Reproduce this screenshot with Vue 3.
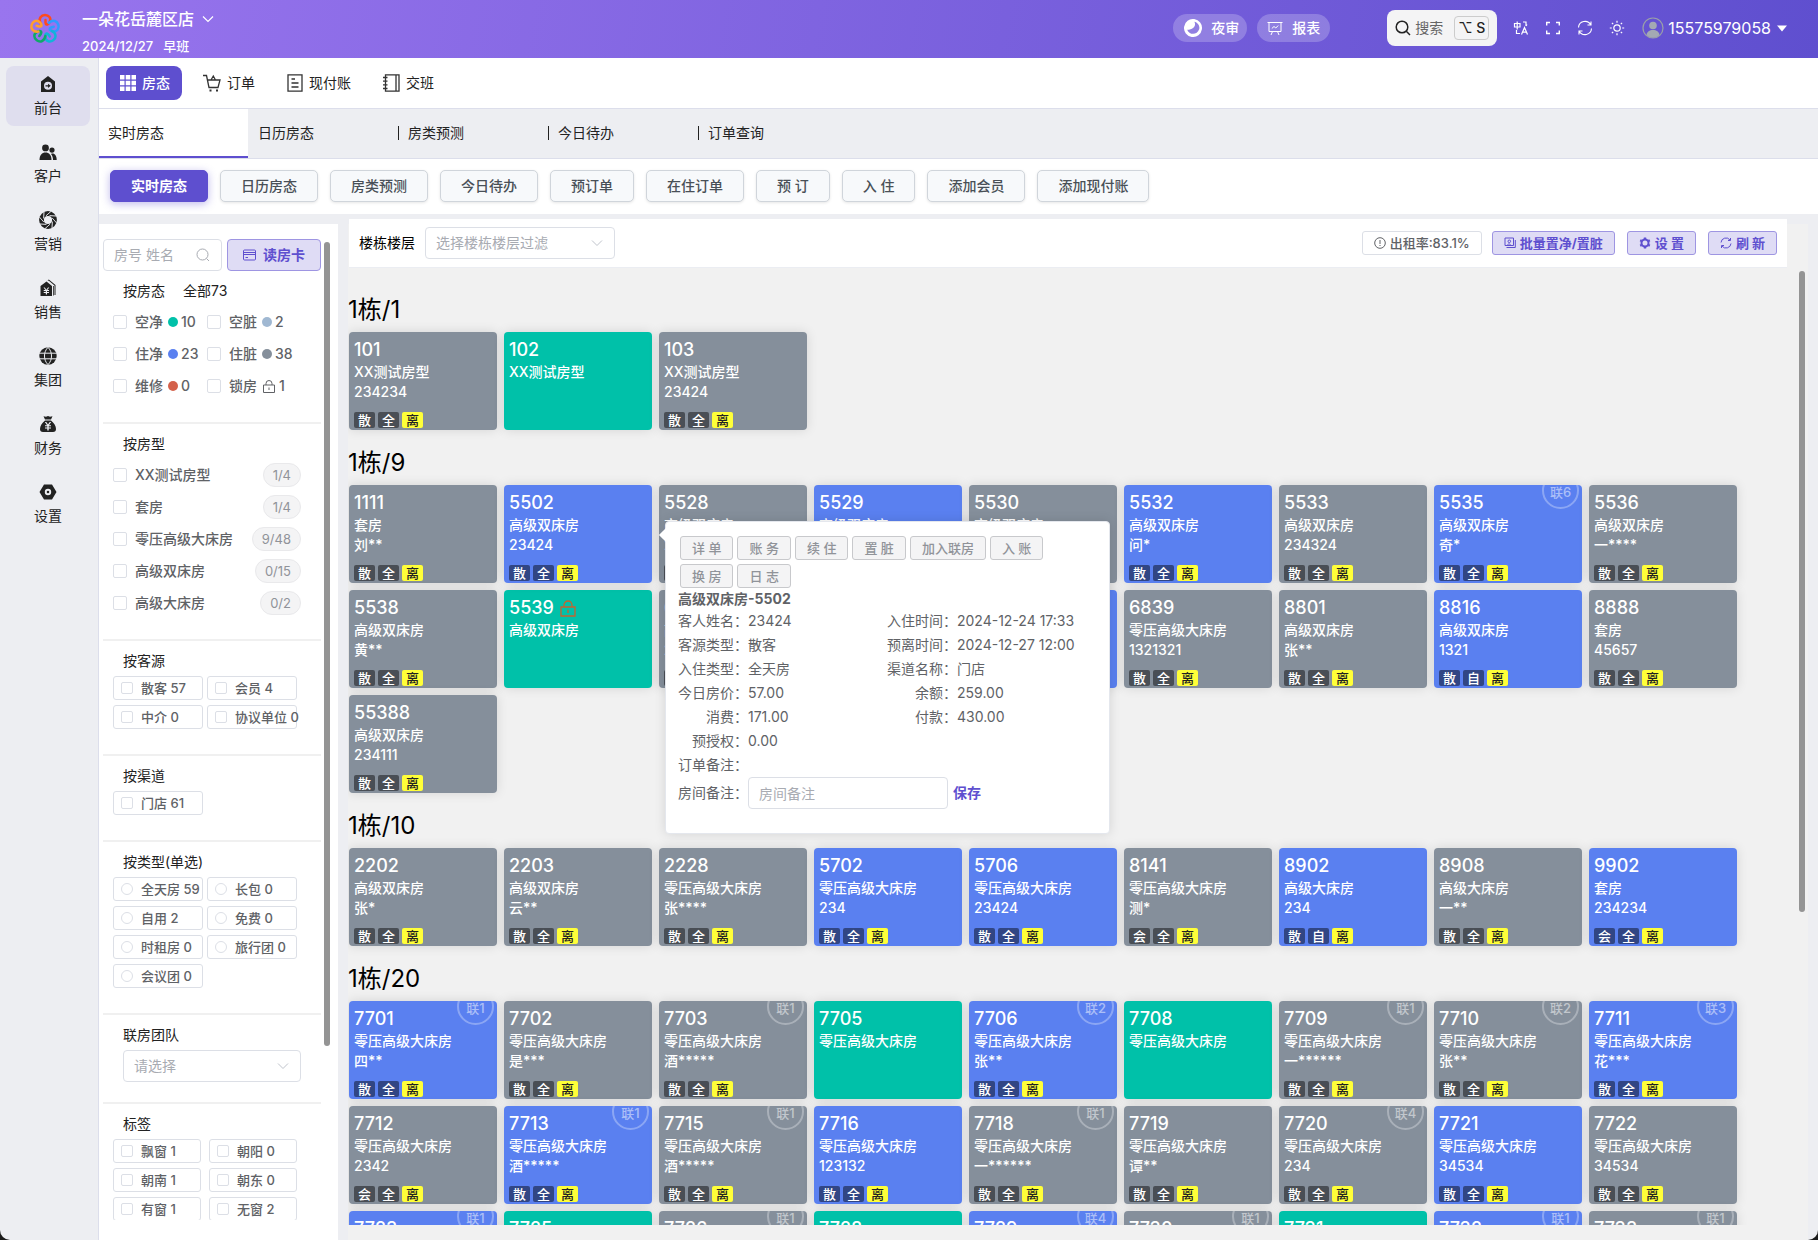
<script setup>
import { ref } from 'vue'

const sideItems = [
  { name: '前台', paths: ['M9 1 16 6.5V17H2V6.5Z M9 6.800a4 4 0 1 0 0 8 4 4 0 0 0 0-8Z M6.500 10.200H9V8.700L11.800 10.800 9 12.900V11.400H6.500Z'] },
  { name: '客户', paths: ['M6.500 1.500a3.400 3.400 0 1 1 0 6.800 3.400 3.400 0 0 1 0-6.800Z', 'M0.500 17c0-5 2.500-7.500 6-7.500s6 2.500 6 7.500Z', 'M13 4.500a2.600 2.600 0 1 1 0 5.200 2.600 2.600 0 0 1 0-5.200Z', 'M14 17c0-2.500-.6-4.500-2-6 3-1.500 5.700 1.500 5.700 6Z'] },
  { name: '营销', aperture: true, paths: [] },
  { name: '销售', paths: ['M7.500 2.500 13 7V17H1.500V7Z M4.500 8.500 6.500 11H4.700V12H6.800V13H4.700V14H6.800V15.500H8V14H10V13H8V12H10V11H8.300L10.300 8.500H9L7.400 10.700 5.800 8.500Z', 'M8.500 1.500 9.800.5 16.500 6V16H15.500V6.500L9.800 1.800Z', 'M14 7 14.800 7V16.500H14Z'] },
  { name: '集团', globe: true, paths: [] },
  { name: '财务', paths: ['M4.500 1.200 7 1.800 9 1 11 1.800 13.500 1.200 12 4.500H6Z', 'M6 5.500H12C15 8 17 11 17 14c0 2-1 3-3 3H4c-2 0-3-1-3-3 0-3 2-6 5-8.500Z M5.800 7 8.100 10.200H6V11.300H8.300V12.400H6V13.500H8.300V15.500H9.700V13.500H12V12.400H9.700V11.300H12V10.200H9.900L12.200 7H10.700L9 9.500 7.300 7Z'] },
  { name: '设置', paths: ['M5 1.500H13L17.500 9 13 16.500H5L.5 9Z M9 5.800a3.200 3.200 0 1 0 0 6.400 3.200 3.200 0 0 0 0-6.400Z', 'M9 7.700a1.300 1.300 0 1 0 0 2.600 1.300 1.300 0 0 0 0-2.600Z'] }
]

const tabs = ['实时房态', '日历房态', '房类预测', '今日待办', '订单查询']
const quick = ['实时房态', '日历房态', '房类预测', '今日待办', '预订单', '在住订单', '预 订', '入 住', '添加会员', '添加现付账']
const petals = ['#ff4a1c', '#2f9bff', '#12b4d8', '#0fa968', '#ff9f2e']

const states = [
  { name: '空净', count: 10, dot: 'clean' },
  { name: '空脏', count: 2, dot: 'dirty' },
  { name: '住净', count: 23, dot: 'stay' },
  { name: '住脏', count: 38, dot: 'used' },
  { name: '维修', count: 0, dot: 'fix' },
  { name: '锁房', count: 1, dot: '' }
]
const types = [
  ['XX测试房型', '1/4'],
  ['套房', '1/4'],
  ['零压高级大床房', '9/48'],
  ['高级双床房', '0/15'],
  ['高级大床房', '0/2']
]
const tileGroups = [
  { title: '按客源', kind: 'checkbox', items: ['散客 57', '会员 4', '中介 0', '协议单位 0'] },
  { title: '按渠道', kind: 'checkbox', items: ['门店 61'] },
  { title: '按类型(单选)', kind: 'radio', items: ['全天房 59', '长包 0', '自用 2', '免费 0', '时租房 0', '旅行团 0', '会议团 0'] }
]
const labels = ['飘窗 1', '朝阳 0', '朝南 1', '朝东 0', '有窗 1', '无窗 2']

const S = '高级双床房'
const D = '高级大床房'
const Z = '零压高级大床房'
// room: number, colour, type, guest, tags, linked group
const room = (no, color, type, guest = '', tags = '散全离', link = '') => ({ no, color, type, guest, tags: guest ? [...tags] : [], link })
const floors = [
  {
    title: '1栋/1',
    rooms: [room('101', 'grey', 'XX测试房型', '234234'), room('102', 'green', 'XX测试房型'), room('103', 'grey', 'XX测试房型', '23424')]
  },
  {
    title: '1栋/9',
    rooms: [
      room('1111', 'grey', '套房', '刘**'), room('5502', 'blue', S, '23424'), room('5528', 'grey', S, '234'),
      room('5529', 'blue', S, '234'), room('5530', 'grey', S, '234'), room('5532', 'blue', S, '问*'),
      room('5533', 'grey', S, '234324'), room('5535', 'blue', S, '奇*', '散全离', '联6'), room('5536', 'grey', S, '一****'),
      room('5538', 'grey', S, '黄**'), { ...room('5539', 'green', S), locked: true }, room('6601', 'grey', S, '234'),
      room('6602', 'grey', S, '234'), room('6603', 'blue', S, '234'), room('6839', 'grey', Z, '1321321'),
      room('8801', 'grey', S, '张**'), room('8816', 'blue', S, '1321', '散自离'), room('8888', 'grey', '套房', '45657'),
      room('55388', 'grey', S, '234111')
    ]
  },
  {
    title: '1栋/10',
    rooms: [
      room('2202', 'grey', S, '张*'), room('2203', 'grey', S, '云**'), room('2228', 'grey', Z, '张****'),
      room('5702', 'blue', Z, '234'), room('5706', 'blue', Z, '23424'), room('8141', 'grey', Z, '测*', '会全离'),
      room('8902', 'blue', D, '234', '散自离'), room('8908', 'grey', D, '一**'), room('9902', 'blue', '套房', '234234', '会全离')
    ]
  },
  {
    title: '1栋/20',
    rooms: [
      room('7701', 'blue', Z, '四**', '散全离', '联1'), room('7702', 'grey', Z, '是***'), room('7703', 'grey', Z, '酒*****', '散全离', '联1'),
      room('7705', 'green', Z), room('7706', 'blue', Z, '张**', '散全离', '联2'), room('7708', 'green', Z),
      room('7709', 'grey', Z, '一******', '散全离', '联1'), room('7710', 'grey', Z, '张**', '散全离', '联2'), room('7711', 'blue', Z, '花***', '散全离', '联3'),
      room('7712', 'grey', Z, '2342', '会全离'), room('7713', 'blue', Z, '酒*****', '散全离', '联1'), room('7715', 'grey', Z, '酒*****', '散全离', '联1'),
      room('7716', 'blue', Z, '123132'), room('7718', 'grey', Z, '一******', '散全离', '联1'), room('7719', 'grey', Z, '谭**'),
      room('7720', 'grey', Z, '234', '散全离', '联4'), room('7721', 'blue', Z, '34534'), room('7722', 'grey', Z, '34534'),
      room('7723', 'blue', Z, '234', '散全离', '联1'), room('7725', 'green', Z), room('7726', 'grey', Z, '234', '散全离', '联1'),
      room('7728', 'green', Z), room('7729', 'blue', Z, '234', '散全离', '联4'), room('7730', 'grey', Z, '234', '散全离', '联1'),
      room('7731', 'green', Z), room('7732', 'blue', Z, '234', '散全离', '联1'), room('7733', 'grey', Z, '234', '散全离', '联1')
    ]
  }
]

const popActions = ['详 单', '账 务', '续 住', '置 脏', '加入联房', '入 账', '换 房', '日 志']
const popRows = [
  ['客人姓名', '23424', '入住时间', '2024-12-24 17:33'],
  ['客源类型', '散客', '预离时间', '2024-12-27 12:00'],
  ['入住类型', '全天房', '渠道名称', '门店'],
  ['今日房价', '57.00', '余额', '259.00'],
  ['消费', '171.00', '付款', '430.00'],
  ['预授权', '0.00', '', ''],
  ['订单备注', '', '', '']
]
const openRoom = ref('5502')
const keyword = ref('')
const note = ref('')
</script>

<template>
  <div class="app">
    <header class="top">
      <svg class="logo" viewBox="-16 -16 32 32" width="32" height="32">
        <g v-for="(c, i) in petals" :key="c" :transform="`rotate(${i * 72})`">
          <path d="M-4.500-5.500C-7-11-3.500-14 0-14S7-11 4.500-6.500C3.500-4.500 1-3 .5-6.500V-9" fill="none" :stroke="c" stroke-width="2.500" stroke-linecap="round" />
        </g>
      </svg>
      <div class="store">
        <button class="store-name">一朵花岳麓区店
          <svg width="12" height="8" viewBox="0 0 12 8"><path d="M1 1.500 6 6.500 11 1.500" fill="none" stroke="#fff" stroke-width="1.200" /></svg>
        </button>
        <div class="store-date"><span>2024/12/27</span><span>早班</span></div>
      </div>
      <button class="pill">
        <svg width="18" height="18" viewBox="0 0 18 18"><path fill="#fff" fill-rule="evenodd" d="M9 0a9 9 0 1 1 0 18A9 9 0 0 1 9 0Z M9.500 2.500C12 6 10 10.500 3.500 11.500 6 16.500 14 16 15.300 9.500 15.800 6 13 2.800 9.500 2.500Z" transform="rotate(8 9 9)" /></svg>
        夜审
      </button>
      <button class="pill narrow">
        <svg width="16" height="16" viewBox="0 0 16 16" fill="none" stroke="#fff" stroke-width="1"><path d="M.5 2.500H15.500M2 2.500V11.500H14V2.500M5.500 11.500 4 15M10.500 11.500 12 15M4.800 8.500 7 6.500 8.800 8 11.200 5.500" /></svg>
        报表
      </button>
      <button class="search">
        <svg width="16" height="16" viewBox="0 0 16 16" fill="none" stroke="#222" stroke-width="1.500"><circle cx="7" cy="7" r="5.800" /><path d="M11.300 11.300 15 15" /></svg>
        搜索
        <kbd>⌥ S</kbd>
      </button>
      <div class="tools">
        <button aria-label="语言"><svg viewBox="0 0 16 16" width="16" height="16" fill="none" stroke="#fff" stroke-width="1.200"><path d="M1.500 3.500H7V7H1.500ZM4.200 1.500V9.500M10 2H13V6M3.500 10V13.500H7M8.500 14.500 11.500 7.500 14.500 14.500M9.700 12.200H13.300M13 6 14 4.500" /></svg></button>
        <button aria-label="全屏"><svg viewBox="0 0 16 16" width="16" height="16" fill="none" stroke="#fff" stroke-width="1.400"><path d="M5 2.500H1.700V5.500M11 2.500H14.300V5.500M5 13.500H1.700V10.500M11 13.500H14.300V10.500" /></svg></button>
        <button aria-label="刷新"><svg viewBox="0 0 16 16" width="16" height="16" fill="none" stroke="#fff" stroke-width="1.100"><path d="M1.500 7.500A6.500 6.500 0 0 1 13.700 4.800M14.500 8.500A6.500 6.500 0 0 1 2.300 11.200M14 1.500V5H10.500M2 14.500V11H5.500" /></svg></button>
        <button aria-label="主题"><svg viewBox="0 0 16 16" width="16" height="16" fill="none" stroke="#fff" stroke-width="1.200"><circle cx="8" cy="8" r="3.200" /><path d="M8 .8V2.800M8 13.200V15.200M.8 8H2.800M13.200 8H15.200M2.900 2.900 4.200 4.200M11.800 11.800 13.100 13.100M13.100 2.900 11.800 4.200M4.200 11.800 2.900 13.100" /></svg></button>
      </div>
      <button class="user">
        <svg width="22" height="22" viewBox="0 0 22 22"><circle cx="11" cy="11" r="10" fill="none" stroke="#9aa0a8" stroke-width="1.200" /><circle cx="11" cy="8.500" r="3.800" fill="#a3a9b3" /><path d="M4.500 18C5 14.500 7.500 13 11 13S17 14.500 17.500 18C14 21.500 8 21.500 4.500 18Z" fill="#a3a9b3" /></svg>
        15575979058
        <svg width="10" height="7" viewBox="0 0 10 7"><path d="M0 .5H10L5 6.500Z" fill="#fff" /></svg>
      </button>
    </header>

    <div class="body">
      <nav class="side">
        <a v-for="(s, i) in sideItems" :key="s.name" href="#" :class="{ on: i === 0 }">
          <svg width="18" height="18" viewBox="0 0 18 18">
            <path v-for="p in s.paths" :key="p" :d="p" fill="#222" fill-rule="evenodd" />
            <g v-if="s.aperture">
              <circle cx="9" cy="9" r="6.500" fill="none" stroke="#222" stroke-width="4.800" />
              <path v-for="n in 8" :key="n" d="M7 4.800 12.200.2" :transform="`rotate(${n * 45} 9 9)`" stroke="#edeef2" stroke-width="0.900" />
            </g>
            <g v-if="s.globe">
              <circle cx="9" cy="9" r="8.700" fill="#222" />
              <path d="M0 6.200H18M0 11.800H18M9 .3C4.300 5 4.300 13 9 17.700M9 .3C13.700 5 13.700 13 9 17.700" fill="none" stroke="#edeef2" stroke-width="1" />
            </g>
          </svg>
          {{ s.name }}
        </a>
      </nav>

      <div class="main">
        <nav class="modules">
          <a href="#" class="on">
            <svg width="16" height="16" viewBox="0 0 16 16" fill="#fff"><path d="M0 0H4.500V4.500H0ZM5.700 0H10.300V4.500H5.700ZM11.500 0H16V4.500H11.500ZM0 5.700H4.500V10.300H0ZM5.700 5.700H10.300V10.300H5.700ZM11.500 5.700H16V10.300H11.500ZM0 11.500H4.500V16H0ZM5.700 11.500H10.300V16H5.700ZM11.500 11.500H16V16H11.500Z" /></svg>
            房态
          </a>
          <a href="#">
            <svg width="18" height="18" viewBox="0 0 18 18" fill="none" stroke="#333" stroke-width="1.300"><path d="M0 1.500H3.500L6 13.500H15L17 6H12.500M4.500 6H8M8 6 10.300 2 12.500 6Z" /><path d="M6.500 16.500H8.500M13 16.500H15" stroke-width="1.800" /></svg>
            订单
          </a>
          <a href="#">
            <svg width="16" height="18" viewBox="0 0 16 18" fill="none" stroke="#333" stroke-width="1.300"><path d="M1 .8H15V17.200H1ZM4.500 5H8M4.500 9H11.500M4.500 13H11.500" /></svg>
            现付账
          </a>
          <a href="#">
            <svg width="17" height="18" viewBox="0 0 17 18" fill="none" stroke="#333" stroke-width="1.300"><path d="M2.500 .8H16V17.200H2.500ZM13 .8V17.200M0 3.500H4.500M0 7.200H4.500M0 10.800H4.500M0 14.500H4.500" /></svg>
            交班
          </a>
        </nav>

        <nav class="tabs">
          <a v-for="(t, i) in tabs" :key="t" href="#" :class="{ on: i === 0, split: i > 1 }"><span>{{ t }}</span></a>
        </nav>

        <div class="quick">
          <button v-for="(q, i) in quick" :key="q" :class="{ on: i === 0 }">{{ q }}</button>
        </div>

        <div class="work">
          <aside class="filters">
            <div class="filter-scroll">
              <div class="find">
                <label class="find-box">
                  <input v-model="keyword" type="text" placeholder="房号 姓名" aria-label="房号 姓名" />
                  <svg width="14" height="14" viewBox="0 0 14 14" fill="none" stroke="#a8abb2"><circle cx="6.500" cy="6.500" r="5.500" /><path d="M10.500 10.500 13 13" /></svg>
                </label>
                <button class="read-card">
                  <svg width="13" height="12" viewBox="0 0 13 12" fill="none" stroke="#5e4fcf"><rect x=".5" y="1" width="12" height="10" rx="1" /><path d="M.5 3.500H12.500M.5 5.500H12.500M2.500 8.500H5" /></svg>
                  读房卡
                </button>
              </div>

              <section>
                <h3><span>按房态</span><span>全部73</span></h3>
                <div class="checks">
                  <label v-for="s in states" :key="s.name" class="half">
                    <input type="checkbox" />{{ s.name }}
                    <i v-if="s.dot" class="dot" :class="s.dot"></i>
                    <svg v-else width="12" height="13" viewBox="0 0 12 13" fill="none" stroke="#606266"><path d="M.5 5H11.500V12.500H.5ZM3 5V3.500a3 3 0 0 1 6 0V5M6 7.500V10" /></svg>
                    <b>{{ s.count }}</b>
                  </label>
                </div>
              </section>

              <section>
                <h3>按房型</h3>
                <div class="checks">
                  <label v-for="t in types" :key="t[0]" class="full"><input type="checkbox" />{{ t[0] }}<em>{{ t[1] }}</em></label>
                </div>
              </section>

              <section v-for="g in tileGroups" :key="g.title">
                <h3>{{ g.title }}</h3>
                <div class="tiles">
                  <label v-for="t in g.items" :key="t"><input :type="g.kind" :name="g.title" />{{ t }}</label>
                </div>
              </section>

              <section>
                <h3>联房团队</h3>
                <div class="select team">
                  <select aria-label="联房团队"><option>请选择</option></select>
                  <svg width="12" height="8" viewBox="0 0 12 8"><path d="M1 1.500 6 6.500 11 1.500" /></svg>
                </div>
              </section>

              <section>
                <h3>标签</h3>
                <div class="tiles tight">
                  <label v-for="t in labels" :key="t"><input type="checkbox" />{{ t }}</label>
                </div>
              </section>
            </div>
            <div class="bar"></div>
          </aside>

          <main class="rooms">
            <div class="toolbar">
              <label for="floor">楼栋楼层</label>
              <div class="select floor">
                <select id="floor"><option>选择楼栋楼层过滤</option></select>
                <svg width="12" height="8" viewBox="0 0 12 8"><path d="M1 1.500 6 6.500 11 1.500" /></svg>
              </div>
              <span class="rate">
                <svg width="12" height="12" viewBox="0 0 12 12" fill="none" stroke="#606266"><circle cx="6" cy="6" r="5.300" /><path d="M6 3V7M6 8V9" /></svg>
                出租率:83.1%
              </span>
              <button>
                <svg width="12" height="12" viewBox="0 0 12 12" fill="none" stroke="#5e4fcf"><path d="M1 1H9.500V8.500H1ZM11.300 3V10.500H2.500M3.500 8 5 6.500 7 8.500" /><circle cx="5.300" cy="4.300" r="1.300" /></svg>
                批量置净/置脏
              </button>
              <button>
                <svg width="12" height="12" viewBox="0 0 12 12" fill="none" stroke="#5e4fcf"><circle cx="6" cy="6" r="3.500" stroke-width="2" /><path d="M6 .5V2M6 10V11.500M1.200 3.300 2.600 4M9.400 8 10.800 8.700M10.800 3.300 9.400 4M2.600 8 1.200 8.700" stroke-width="2.400" /></svg>
                设 置
              </button>
              <button>
                <svg width="12" height="12" viewBox="0 0 12 12" fill="none" stroke="#5e4fcf"><path d="M1 5.500A5 5 0 0 1 10 3M11 6.500A5 5 0 0 1 2 9M10.500 1V3.500H8M1.500 11V8.500H4" /></svg>
                刷 新
              </button>
            </div>

            <div class="room-wrap">
              <div class="room-scroll">
                <section v-for="f in floors" :key="f.title">
                  <h2>{{ f.title }}</h2>
                  <div class="grid">
                    <div v-for="r in f.rooms" :key="r.no" class="cell" :class="{ open: r.no === openRoom }">
                      <article class="card" :class="r.color">
                        <div class="no">{{ r.no }}
                          <svg v-if="r.locked" width="16" height="17" viewBox="0 0 16 17" fill="none" stroke="#c4632f" stroke-width="1.300"><path d="M1 7H15V16H1ZM4 7V5a4 4 0 0 1 8 0V7M8 9.500V13" /></svg>
                        </div>
                        <div class="line">{{ r.type }}</div>
                        <div class="line">{{ r.guest }}</div>
                        <div class="tags"><i v-for="t in r.tags" :key="t" :class="{ leave: t === '离' }">{{ t }}</i></div>
                        <span v-if="r.link" class="link">{{ r.link }}</span>
                      </article>

                      <div v-if="r.no === openRoom" class="pop">
                        <div class="pop-actions"><button v-for="a in popActions" :key="a">{{ a }}</button></div>
                        <h4>高级双床房-5502</h4>
                        <dl>
                          <div v-for="row in popRows" :key="row[0]">
                            <dt>{{ row[0] }}：</dt><dd>{{ row[1] }}</dd>
                            <template v-if="row[2]"><dt>{{ row[2] }}：</dt><dd>{{ row[3] }}</dd></template>
                          </div>
                        </dl>
                        <div class="note">
                          <label for="note">房间备注：</label>
                          <input id="note" v-model="note" type="text" placeholder="房间备注" />
                          <button>保存</button>
                        </div>
                      </div>
                    </div>
                  </div>
                </section>
              </div>
              <div class="bar"></div>
            </div>
          </main>
        </div>
      </div>
    </div>
  </div>
</template>

<style>
html { background: #1b1b1b; }
body { margin: 0; }
</style>

<style scoped>
* { box-sizing: border-box; }
.app {
  display: flex;
  flex-direction: column;
  height: 100vh;
  overflow: hidden;
  border-radius: 0 0 10px 10px;
  background: #edeef2;
  color: #222;
  font: 14px/22px Inter, "Noto Sans CJK SC", sans-serif;
}
button, input, select { font: inherit; color: inherit; margin: 0; }
button { display: inline-flex; align-items: center; justify-content: center; padding: 0; border: 0; background: none; white-space: nowrap; flex: none; }
a { color: inherit; text-decoration: none; }
svg { flex: none; display: block; }
h2, h3, h4, dl, dd { margin: 0; font-weight: 400; }
i, em { font-style: normal; }

.top { display: flex; align-items: center; height: 58px; flex: none; padding: 0 31px 2px 29px; background: linear-gradient(100deg, #9975ee, #5f4fcf); color: #fff; }
.logo { margin: 2px 21px 0 0; }
.store { flex: 1; padding-top: 10px; }
.store-name { gap: 8px; font-size: 16px; font-weight: 500; line-height: 26px; }
.store-date { display: flex; gap: 10px; font-size: 13px; font-weight: 500; line-height: 28px; }
.pill { height: 28px; gap: 9px; padding: 0 8px 0 11px; margin-right: 10px; border-radius: 14px; background: rgba(255, 255, 255, .22); font-weight: 500; }
.pill.narrow { margin-right: 57px; padding: 0 10px; }
.search { height: 36px; gap: 4px; padding: 0 8px; border-radius: 8px; background: #f4f4f5; color: #666; }
kbd { display: block; margin-left: 7px; padding: 0 3px; height: 24px; border: 1px solid #ccc; border-radius: 4px; font: 500 14px/22px Inter, "DejaVu Sans", sans-serif; color: #222; }
.tools { display: flex; gap: 16px; margin: 0 17px 0 16px; }
.user { gap: 4px; font-size: 16px; }
.user svg:last-child { margin-left: 2px; }

.body { display: flex; flex: 1; min-height: 0; }
.side { width: 98px; flex: none; padding: 8px 8px 0 6px; display: flex; flex-direction: column; gap: 8px; }
.side a { display: flex; flex-direction: column; align-items: center; gap: 4px; height: 60px; padding-top: 9px; border-radius: 8px; }
.side a.on { background: #dfdeee; }

.main { flex: 1; min-width: 0; display: flex; flex-direction: column; border-left: 1px solid #dcdeeb; }
.modules { display: flex; align-items: center; gap: 12px; height: 51px; flex: none; padding-left: 7px; background: #fff; border-bottom: 1px solid #dcdeeb; }
.modules a { display: flex; align-items: center; gap: 6px; height: 34px; padding: 0 11px 0 9px; border-radius: 8px; }
.modules a.on { background: #5e4fcf; color: #fff; font-weight: 500; padding: 0 12px 0 14px; }

.tabs { display: flex; height: 50px; flex: none; border-bottom: 1px solid #dcdeeb; }
.tabs a { display: flex; align-items: center; width: 150px; padding-bottom: 2px; }
.tabs a:first-child { width: 149px; }
.tabs span { padding-left: 9px; line-height: 14px; border-left: 1px solid transparent; }
.tabs a.on { background: #fff; border-bottom: 2px solid #5e4fcf; padding-bottom: 0; }
.tabs a.on span { padding-left: 8px; }
.tabs a.split span { border-color: #222; }

.quick { display: flex; align-items: center; gap: 12px; height: 55px; flex: none; padding: 0 0 2px 11px; background: #fff; }
.quick button { height: 32px; padding: 0 20px; border: 1px solid #d0d5db; border-radius: 5px; background: #f7f9fb; color: #495057; font-weight: 500; box-shadow: 0 1px 3px rgba(0, 0, 0, .1); }
.quick button.on { border-color: #5e4fcf; background: #5e4fcf; color: #fff; font-weight: 700; box-shadow: 0 2px 8px rgba(94, 79, 207, .4); }

.work { display: flex; flex: 1; min-height: 0; padding: 10px 10px 0 0; }
.bar { width: 6px; border-radius: 3px; background: #949494; flex: none; }

.filters { display: flex; gap: 3px; width: 239px; flex: none; padding: 15px 0 20px 4px; background: #fff; }
.filters .bar { height: 82%; margin-top: 3px; }
.filter-scroll { width: 218px; overflow: hidden; }
.find { display: flex; gap: 5px; }
.find-box { display: flex; align-items: center; flex: 1; min-width: 0; height: 32px; padding: 0 11px 0 10px; border: 1px solid #dcdfe6; border-radius: 4px; }
input[type="text"] { flex: 1; min-width: 0; padding: 0; border: 0; outline: 0; background: none; }
input::placeholder { color: #a8abb2; opacity: 1; }
.read-card { width: 94px; height: 32px; gap: 7px; border: 1px solid #9e95e2; border-radius: 4px; background: #dfdcf5; color: #5e4fcf; font-weight: 700; }
.filters section { padding-bottom: 20px; border-bottom: 2px solid #f0f0f0; }
.filters section:last-child { border: 0; }
h3 { display: flex; gap: 18px; padding: 9px 0 4px 20px; font-size: 14px; line-height: 22px; }
.checks, .tiles { display: flex; flex-wrap: wrap; padding-left: 10px; color: #606266; font-weight: 500; }
.checks label, .tiles label { display: flex; align-items: center; white-space: nowrap; }
.checks label { height: 32px; }
.half { width: 94px; }
.full { width: 188px; }
.checks b { font-weight: 500; margin-left: 3px; }
.checks svg { margin: 0 1px 0 6px; }
.full em { margin-left: auto; height: 24px; padding: 0 9px; border: 1px solid #e9e9eb; border-radius: 12px; background: #f4f4f5; color: #909399; font-size: 13px; font-weight: 400; }
.dot { width: 10px; height: 10px; margin-left: 5px; border-radius: 50%; }
.clean { background: #00c1a9; }
.dirty { background: #a0b8d2; }
.stay { background: #5a80f0; }
.used { background: #858f9b; }
.fix { background: #d4614b; }
input[type="checkbox"], input[type="radio"] { appearance: none; flex: none; width: 14px; height: 14px; margin-right: 8px; border: 1px solid #dcdfe6; border-radius: 2px; background: #fff; }
.tiles { gap: 5px 4px; margin-bottom: 5px; font-size: 13px; }
.tiles label { width: 90px; height: 24px; padding-left: 7px; border: 1px solid #dcdfe6; border-radius: 3px; }
.tiles input { width: 12px; height: 12px; }
.tiles input[type="radio"] { border-radius: 50%; }
.tiles.tight { column-gap: 8px; }
.tiles.tight label { width: 88px; }
.select { position: relative; height: 32px; }
.select select { appearance: none; width: 100%; height: 32px; padding: 0 30px 0 10px; border: 1px solid #dcdfe6; border-radius: 4px; background: #fff; color: #a8abb2; }
.select svg { position: absolute; right: 12px; top: 12px; fill: none; stroke: #c0c4cc; pointer-events: none; }
.team { width: 178px; margin-left: 20px; }

.rooms { flex: 1; min-width: 0; display: flex; flex-direction: column; margin-left: 10px; background: #f1f1f1; }
.toolbar { display: flex; align-items: center; height: 49px; flex: none; margin: -5px 21px 0 1px; padding: 0 10px; background: #fff; border-bottom: 1px solid #ebedf2; }
.toolbar > label { margin-right: 10px; color: #000; }
.floor { width: 190px; margin-right: auto; }
.rate, .toolbar button { display: flex; align-items: center; gap: 4px; height: 24px; padding: 0 11px; border: 1px solid #9e95e2; border-radius: 3px; background: #dfdcf5; color: #5e4fcf; font-size: 13px; font-weight: 700; line-height: 22px; }
.toolbar button { margin-left: 12px; }
.toolbar .rate { margin-right: -2px; border-color: #dcdfe6; background: #fff; color: #606266; font-weight: 500; }
.room-wrap { display: flex; flex: 1; min-height: 0; padding: 0 3px 15px 0; }
.room-scroll { flex: 1; min-width: 0; overflow: hidden; padding-top: 16px; }
.room-wrap .bar { height: 67%; margin-top: 3px; }
h2 { padding-top: 4px; font-size: 24px; line-height: 44px; color: #000; }
.grid { display: flex; flex-wrap: wrap; gap: 7px; margin-bottom: 7px; padding-left: 1px; }
.cell { position: relative; width: 148px; }
.cell.open { z-index: 2; }
.card { position: relative; height: 98px; padding: 7px 5px 2px; overflow: hidden; border-radius: 4px; box-shadow: 0 0 12px rgba(0, 0, 0, .12); color: #fff; font-weight: 500; display: flex; flex-direction: column; }
.grey { background: #858f9b; }
.green { background: #00c1a9; }
.blue { background: #5a80f0; }
.no { display: flex; align-items: center; gap: 6px; margin-bottom: 1px; font-size: 18px; line-height: 22px; }
.line { line-height: 20px; white-space: nowrap; min-height: 20px; }
.tags { display: flex; gap: 3px; margin-top: auto; }
.tags i { width: 21px; height: 16px; border-radius: 2px; background: rgba(0, 0, 0, .45); text-align: center; font-size: 13px; line-height: 16px; }
.tags i.leave { background: #ffff38; color: #222; }
.link { position: absolute; right: 3px; top: -13px; width: 37px; height: 37px; padding-top: 8px; border: 2px solid rgba(255, 255, 255, .3); border-radius: 50%; color: rgba(255, 255, 255, .5); font-size: 13px; line-height: 20px; text-align: center; }

.pop { position: absolute; left: 161px; top: 36px; width: 445px; height: 313px; padding: 14px 12px; border: 1px solid #e4e7ed; border-radius: 4px; background: #fff; box-shadow: 0 0 12px rgba(0, 0, 0, .12); color: #606266; }
.pop::before { content: ""; position: absolute; left: -5px; top: 8px; width: 10px; height: 10px; background: #fff; transform: rotate(45deg); }
.pop-actions { display: flex; flex-wrap: wrap; gap: 4px; width: 380px; padding-left: 2px; }
.pop-actions button { height: 24px; padding: 0 11px; border: 1px solid #c8c9cc; border-radius: 3px; background: #f4f4f5; color: #909399; font-size: 13px; font-weight: 500; }
h4 { font-weight: 700; line-height: 21px; }
dl > div { display: flex; height: 24px; line-height: 24px; }
dt { width: 70px; text-align: right; white-space: nowrap; }
dd { width: 139px; white-space: nowrap; }
.note { display: flex; align-items: center; height: 32px; }
.note label { width: 70px; }
.note input[type="text"] { flex: none; width: 200px; height: 32px; padding: 0 10px; border: 1px solid #dcdfe6; border-radius: 4px; }
.note button { margin-left: 5px; color: #5e4fcf; font-weight: 700; }
</style>
